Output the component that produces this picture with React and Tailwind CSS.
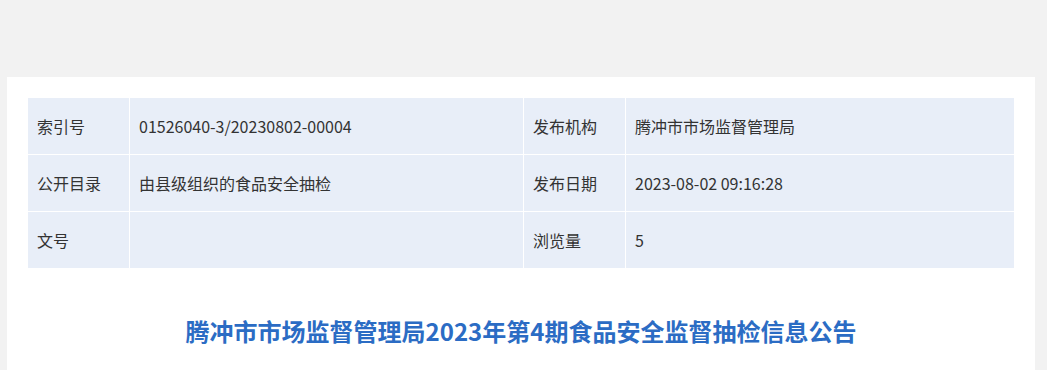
const rows = [
  ["索引号", "01526040-3/20230802-00004", "发布机构", "腾冲市市场监督管理局"],
  ["公开目录", "由县级组织的食品安全抽检", "发布日期", "2023-08-02 09:16:28"],
  ["文号", "", "浏览量", "5"],
];

const App = () => {
  return (
    <div className="min-h-[370px] bg-[#f2f2f2] pt-[77px] pl-[7px] pr-[12px] font-['Microsoft_YaHei','Noto_Sans_CJK_SC',sans-serif]">
      <div className="bg-white px-[20px] pt-[20px] pb-10">
        <table className="w-full border-collapse text-[16px] text-[#333]">
          <colgroup>
            <col className="w-[102px]" />
            <col className="w-[394px]" />
            <col className="w-[102px]" />
            <col />
          </colgroup>
          <tbody>
            {rows.map((r, i) => (
              <tr key={i} className="h-[57px]">
                {r.map((cell, j) => (
                  <td key={j} className="bg-[#e8eef8] border border-white px-[9px] align-middle">
                    {cell}
                  </td>
                ))}
              </tr>
            ))}
          </tbody>
        </table>

        <h1 className="mt-[46px] text-center text-[24px] font-bold text-[#2b6cc4] leading-[32px]">
          腾冲市市场监督管理局2023年第4期食品安全监督抽检信息公告
        </h1>
      </div>
    </div>
  );
};

export default App;
